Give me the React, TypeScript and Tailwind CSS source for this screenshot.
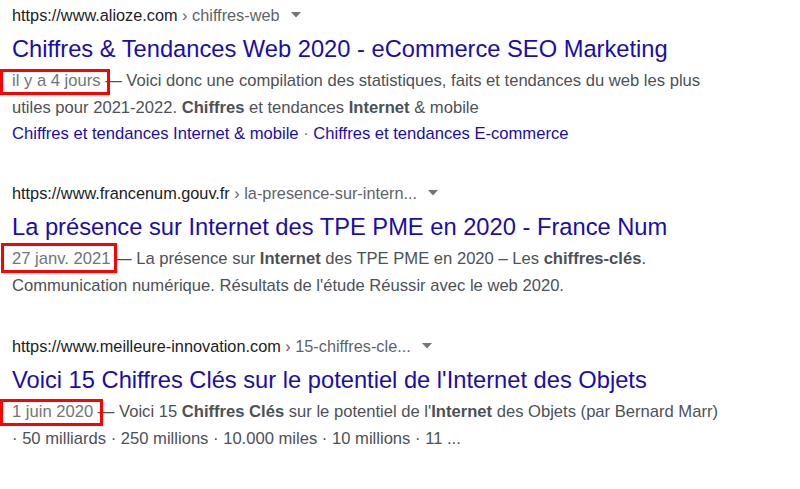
import React from "react";

const Caret = () => (
  <svg width="10" height="6" viewBox="0 0 10 6" className="inline-block ml-[11px] mb-[3px]">
    <path d="M0 0 L10 0 L5 5.5 Z" fill="#70757a" />
  </svg>
);

function DateBox({ text, box }: { text: string; box: string }) {
  return (
    <span className="relative inline-block text-[#70757a]">
      {text}
      <span className={"absolute border-[3px] border-[#f00] pointer-events-none " + box} />
    </span>
  );
}

function Url({ host, path }: { host: string; path: string }) {
  return (
    <div className="h-[32px] leading-[30px] text-[16.3px] text-[#202124] whitespace-nowrap">
      {host}
      <span className="text-[#5f6368]"> › {path}</span>
      <Caret />
    </div>
  );
}

function Title({ children }: { children: React.ReactNode }) {
  return (
    <div className="h-[36px] leading-[34px] text-[23.7px] text-[#1a0dab] whitespace-nowrap">{children}</div>
  );
}

export default function App() {
  return (
    <div
      className="w-[800px] h-[489px] bg-white overflow-hidden pl-[12px]"
      style={{ fontFamily: '"Liberation Sans", Arial, sans-serif' }}
    >
      <div>
        <Url host="https://www.alioze.com" path="chiffres-web" />
        <Title>Chiffres &amp; Tendances Web 2020 - eCommerce SEO Marketing</Title>
        <div className="text-[16.6px] leading-[26.5px] text-[#4d5156]">
          <div className="whitespace-nowrap">
            <DateBox text="il y a 4 jours" box="-left-[12px] -right-[9px] top-[1px] bottom-[0px]" /> — Voici donc une
            compilation des statistiques, faits et tendances du web les plus
          </div>
          <div className="whitespace-nowrap">
            utiles pour 2021-2022. <b>Chiffres</b> et tendances <b>Internet</b> &amp; mobile
          </div>
          <div className="whitespace-nowrap text-[#1a0dab]">
            Chiffres et tendances Internet &amp; mobile<span className="text-[#70757a]"> · </span>Chiffres et
            tendances E-commerce
          </div>
        </div>
      </div>

      <div className="mt-[30.5px]">
        <Url host="https://www.francenum.gouv.fr" path="la-presence-sur-intern..." />
        <Title>La présence sur Internet des TPE PME en 2020 - France Num</Title>
        <div className="text-[16.6px] leading-[26.5px] text-[#4d5156]">
          <div className="whitespace-nowrap">
            <DateBox text="27 janv. 2021" box="-left-[11px] -right-[7px] -top-[3px] bottom-[0px]" /> — La présence sur{" "}
            <b>Internet</b> des TPE PME en 2020 – Les <b>chiffres-clés</b>.
          </div>
          <div className="whitespace-nowrap">Communication numérique. Résultats de l'étude Réussir avec le web 2020.</div>
        </div>
      </div>

      <div className="mt-[32px]">
        <Url host="https://www.meilleure-innovation.com" path="15-chiffres-cle..." />
        <Title>Voici 15 Chiffres Clés sur le potentiel de l'Internet des Objets</Title>
        <div className="text-[16.6px] leading-[26.5px] text-[#4d5156]">
          <div className="whitespace-nowrap">
            <DateBox text="1 juin 2020" box="-left-[12px] -right-[10px] top-[0px] bottom-[0px]" /> — Voici 15{" "}
            <b>Chiffres Clés</b> sur le potentiel de l'<b>Internet</b> des Objets (par Bernard Marr)
          </div>
          <div className="whitespace-nowrap">· 50 milliards · 250 millions · 10.000 miles · 10 millions · 11 ...</div>
        </div>
      </div>
    </div>
  );
}
